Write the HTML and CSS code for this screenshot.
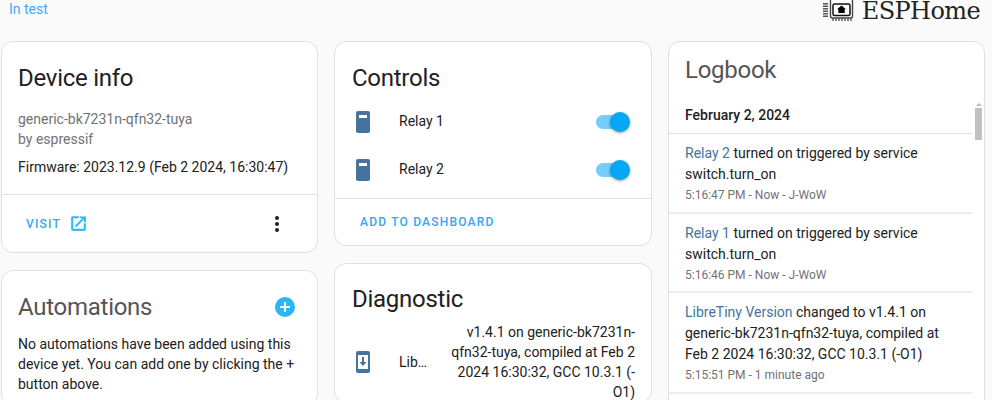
FILE: index.html
```html
<!DOCTYPE html>
<html lang="en">
<head>
<meta charset="utf-8">
<title>ESPHome device</title>
<link rel="stylesheet" href="styles.css">
</head>
<body>
<header class="topbar">
  <a class="intest">In test</a>
  <div class="logo">
    <svg class="chip" width="32" height="22" viewBox="0 0 32 22">
      <g fill="#555"><rect x="0" y="3" width="5" height="1.500"/><rect x="0" y="5.500" width="5" height="1.500"/><rect x="0" y="8" width="5" height="1.500"/><rect x="0" y="10.500" width="5" height="1.500"/><rect x="0" y="13" width="5" height="1.500"/><rect x="0" y="15.500" width="5" height="1.500"/></g>
      <rect x="7.500" y="-3" width="22" height="21" rx="2" fill="#fff" stroke="#444" stroke-width="1.400"/>
      <rect x="10" y="4" width="17" height="11.500" rx="1.500" fill="#fff" stroke="#111" stroke-width="1.500"/>
      <path d="M18.500 5.500l4.500 3.800h-1.300V13h-6.400V9.300H14z" fill="#000"/>
      <path d="M10 18v3M13 18v3M16 18v3M19 18v3M22 18v3M25 18v3M28 18v3" stroke="#555" stroke-width="1.400"/>
    </svg>
    <span class="logotext">ESPHome</span>
  </div>
</header>
<main class="columns">
  <div class="col">
    <section class="card card-info">
      <h2 class="title title-info">Device info</h2>
      <div class="model">generic-bk7231n-qfn32-tuya<br>by espressif</div>
      <div class="firmware">Firmware: 2023.12.9 (Feb 2 2024, 16:30:47)</div>
      <div class="actions actions-info">
        <a class="btn visit">VISIT
          <svg class="ext" width="19" height="19" viewBox="0 0 24 24"><path fill="#29b6f6" stroke="#29b6f6" stroke-width="0.600" d="M14 3v2h3.590l-9.830 9.830 1.410 1.410L19 6.410V10h2V3m-2 16H5V5h7V3H5a2 2 0 0 0-2 2v14a2 2 0 0 0 2 2h14a2 2 0 0 0 2-2v-7h-2v7z"/></svg>
        </a>
        <svg class="dots" width="24" height="24" viewBox="0 0 24 24"><path fill="#212121" d="M12 16a2 2 0 1 1 0 4 2 2 0 0 1 0-4m0-6a2 2 0 1 1 0 4 2 2 0 0 1 0-4m0-6a2 2 0 1 1 0 4 2 2 0 0 1 0-4z"/></svg>
      </div>
    </section>
    <section class="card">
      <div class="auto-head">
        <h2 class="title title-auto">Automations</h2>
        <svg class="plus" width="20" height="20" viewBox="0 0 20 20"><circle cx="10" cy="10" r="10" fill="#29b6f6"/><path d="M10 5v10M5 10h10" stroke="#fff" stroke-width="2"/></svg>
      </div>
      <p class="auto-text">No automations have been added using this device yet. You can add one by clicking the + button above.</p>
    </section>
  </div>
  <div class="col">
    <section class="card card-controls">
      <h2 class="title title-c">Controls</h2>
      <div class="row">
        <svg class="ic" width="24" height="24" viewBox="0 0 24 24"><path fill="#44739e" d="M7 1h10a2 2 0 0 1 2 2v18a2 2 0 0 1-2 2H7a2 2 0 0 1-2-2V3a2 2 0 0 1 2-2zm1 4v3h8V5z"/></svg>
        <span class="name">Relay 1</span>
        <span class="toggle"><span class="knob"></span></span>
      </div>
      <div class="row">
        <svg class="ic" width="24" height="24" viewBox="0 0 24 24"><path fill="#44739e" d="M7 1h10a2 2 0 0 1 2 2v18a2 2 0 0 1-2 2H7a2 2 0 0 1-2-2V3a2 2 0 0 1 2-2zm1 4v3h8V5z"/></svg>
        <span class="name">Relay 2</span>
        <span class="toggle"><span class="knob"></span></span>
      </div>
      <div class="actions actions-c"><a class="btn add">ADD TO DASHBOARD</a></div>
    </section>
    <section class="card">
      <h2 class="title title-d">Diagnostic</h2>
      <div class="diag">
        <svg class="ic" width="24" height="24" viewBox="0 0 24 24"><path fill="#44739e" d="M7 1h10a2 2 0 0 1 2 2v18a2 2 0 0 1-2 2H7a2 2 0 0 1-2-2V3a2 2 0 0 1 2-2zm0 4v14h10V5zm4 2h2v5h2.500L12 16l-3.500-4H11z"/></svg>
        <span class="name diag-name">LibreTiny Version</span>
        <span class="diag-val">v1.4.1 on generic-bk7231n-qfn32-tuya, compiled at Feb 2 2024 16:30:32, GCC 10.3.1 (-O1)</span>
      </div>
    </section>
  </div>
  <div class="col">
    <section class="card card-log">
      <h2 class="title title-log">Logbook</h2>
      <div class="scrollbar"><span class="arrow"></span><span class="thumb"></span></div>
      <div class="date">February 2, 2024</div>
      <div class="entry">
        <div class="msg"><span class="ent">Relay 2</span> turned on triggered by service switch.turn_on</div>
        <div class="when">5:16:47 PM - Now - J-WoW</div>
      </div>
      <div class="entry">
        <div class="msg"><span class="ent">Relay 1</span> turned on triggered by service switch.turn_on</div>
        <div class="when">5:16:46 PM - Now - J-WoW</div>
      </div>
      <div class="entry">
        <div class="msg"><span class="ent">LibreTiny Version</span> changed to v1.4.1 on generic-bk7231n-qfn32-tuya, compiled at Feb 2 2024 16:30:32, GCC 10.3.1 (-O1)</div>
        <div class="when">5:15:51 PM - 1 minute ago</div>
      </div>
    </section>
  </div>
</main>
</body>
</html>
```
FILE: styles.css
```css
* { box-sizing: border-box; }
html, body { margin: 0; height: 400px; overflow: hidden; }
body { background: #fafafa; font-family: Roboto, sans-serif; color: #212121; font-size: 14px; }
.topbar { height: 41px; display: flex; justify-content: space-between; align-items: flex-start; padding: 0 12px 0 9px; }
.intest { color: #42a9f5; font-size: 14px; line-height: 18px; }
.logo { display: flex; align-items: flex-start; gap: 7px; }
.logotext { font-family: "DejaVu Serif", serif; font-size: 24px; line-height: 22px; color: #222; letter-spacing: -0.6px; }
.columns { display: grid; grid-template-columns: 317px 318px 317px; gap: 16px; padding: 0 7px 0 1px; }
.col { display: flex; flex-direction: column; gap: 17px; }
.card { background: #fff; border: 1px solid #e0e0e0; border-radius: 12px; }
.title { margin: 0; font-weight: 400; font-size: 24px; line-height: 32px; color: #212121; letter-spacing: -0.27px; }
.title-info { padding: 20px 16px 0; }
.model { padding: 15px 16px 0; color: #727272; line-height: 20px; }
.firmware { padding: 8px 16px 17px; line-height: 20px; }
.actions { border-top: 1px solid #e0e0e0; display: flex; justify-content: space-between; align-items: center; }
.actions-info { height: 58px; padding: 0 32px 0 24px; }
.btn { color: #2fa8f5; font-size: 12px; font-weight: 500; letter-spacing: 1.2px; display: flex; align-items: center; }
.ext { margin-left: 8px; }
.dots { margin-right: -4px; }
.auto-head { display: flex; justify-content: space-between; align-items: center; padding: 20px 22px 0 16px; }
.title-auto { color: #555; }
.auto-text { margin: 0; padding: 11px 16px; line-height: 20px; }
.card-controls { height: 205px; }
.title-c { padding: 20px 17px 3px; }
.row { display: flex; align-items: center; height: 48px; padding: 0 21px 0 16px; }
.row .ic, .row .toggle { margin-top: 2px; }
.name { margin-left: 24px; flex: 1; color: #212121; }
.toggle { width: 32px; height: 14px; border-radius: 7px; background: #74cdfb; position: relative; margin-right: 2px; }
.knob { position: absolute; right: -2px; top: -3px; width: 20px; height: 20px; border-radius: 50%; background: #03a9f4; box-shadow: 0 1px 3px rgba(0,0,0,.4); }
.actions-c { margin-top: 5px; height: 46px; padding: 0 25px; }
.title-d { padding: 19px 17px 0; }
.diag { display: flex; align-items: center; padding: 0 16px; margin-top: 7px; }
.diag-name { flex: 0 0 auto; width: 29px; overflow: hidden; text-overflow: ellipsis; white-space: nowrap; }
.diag-val { flex: 1; margin-left: 23px; text-align: right; line-height: 20px; }
.card-log { position: relative; height: 420px; overflow: hidden; }
.title-log { padding: 12px 16px 0; color: #555; }
.scrollbar { position: absolute; top: 61px; right: 1px; width: 9px; display: flex; flex-direction: column; align-items: center; }
.arrow { width: 0; height: 0; border: 3px solid transparent; border-top-width: 0; border-bottom: 3px solid #bbb; margin-bottom: 2px; }
.thumb { width: 7px; height: 32px; background: #c1c1c1; }
.date { padding: 19px 16px 0; font-weight: 500; line-height: 20px; height: 48px; margin-right: 11px; border-bottom: 1px solid #e0e0e0; }
.entry { margin-right: 11px; padding: 9px 16px 6.5px; border-bottom: 2px solid #eee; line-height: 21px; }
.ent { color: #44739e; }
.when { color: #727272; font-size: 12px; line-height: 20px; }
```
